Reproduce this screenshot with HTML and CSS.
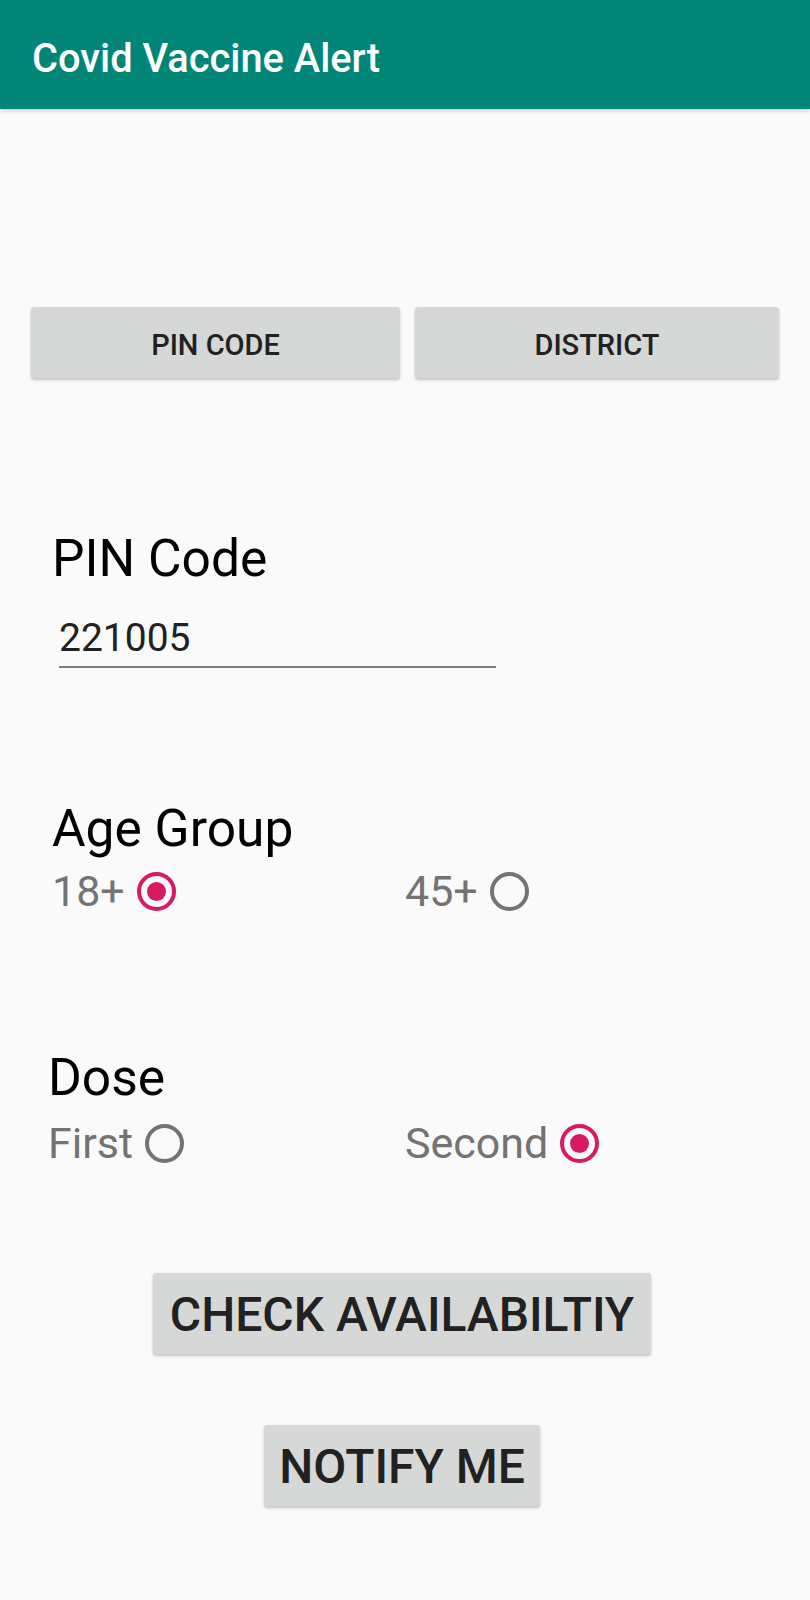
FILE: index.html
```html
<!DOCTYPE html>
<html lang="en">
<head>
<meta charset="utf-8">
<title>Covid Vaccine Alert</title>
<link rel="stylesheet" href="styles.css">
</head>
<body>
<header class="appbar">
  <h1 class="title">Covid Vaccine Alert</h1>
</header>
<main class="content">
  <div class="tabs">
    <button class="btn tab tab-pin">PIN CODE</button>
    <button class="btn tab tab-district">DISTRICT</button>
  </div>

  <section class="pin-field">
    <div class="label label-pin">PIN Code</div>
    <div class="input">221005</div>
  </section>

  <section class="group age-group">
    <div class="label label-age">Age Group</div>
    <div class="radio-row">
      <label class="radio-item"><span class="radio-text">18+</span><span class="radio checked"></span></label>
      <label class="radio-item"><span class="radio-text">45+</span><span class="radio"></span></label>
    </div>
  </section>

  <section class="group dose-group">
    <div class="label label-dose">Dose</div>
    <div class="radio-row dose-row">
      <label class="radio-item"><span class="radio-text">First</span><span class="radio"></span></label>
      <label class="radio-item"><span class="radio-text">Second</span><span class="radio checked"></span></label>
    </div>
  </section>

  <div class="actions">
    <button class="btn big check">CHECK AVAILABILTIY</button>
    <button class="btn big notify">NOTIFY ME</button>
  </div>
</main>
</body>
</html>
```

FILE: styles.css
```css
* { box-sizing: border-box; }

html, body {
  margin: 0;
  padding: 0;
  background: #fafafa;
  font-family: Roboto, "Noto Sans", "Liberation Sans", sans-serif;
  width: 810px;
  height: 1600px;
  overflow: hidden;
}

.appbar {
  height: 109px;
  background: #008577;
  display: flex;
  align-items: center;
  padding-left: 32px;
  box-shadow: 0 2px 4px rgba(0, 0, 0, 0.18);
  position: relative;
  z-index: 1;
}

.title {
  margin: 0;
  color: #ffffff;
  font-size: 39.8px;
  font-weight: 500;
  line-height: 1;
  padding-top: 8px;
}

.content {
  display: flex;
  flex-direction: column;
}

.btn {
  font-family: Roboto, "Noto Sans", "Liberation Sans", sans-serif;
  font-weight: 500;
  color: #212121;
  background: #d6d7d7;
  border: none;
  border-radius: 3px;
  box-shadow: 0 2px 3px rgba(0, 0, 0, 0.22);
  padding: 0;
}

.tabs {
  display: flex;
  gap: 15px;
  margin-top: 198px;
  padding-left: 31px;
}

.tab {
  height: 71px;
  font-size: 29px;
  padding-top: 4px;
}

.tab-pin { width: 369px; }
.tab-district { width: 364px; }

.label {
  font-size: 51.5px;
  line-height: 1;
  color: #000000;
}

.pin-field {
  margin-top: 155px;
  padding-left: 52px;
}

.input {
  margin-top: 34px;
  margin-left: 7px;
  width: 437px;
  font-size: 39px;
  line-height: 1;
  color: #212121;
  padding-left: 0;
  padding-bottom: 8px;
  border-bottom: 2px solid #7f7f7f;
}

.age-group {
  margin-top: 135px;
  padding-left: 52px;
}

.dose-group {
  margin-top: 139px;
  padding-left: 48px;
}

.radio-row {
  display: grid;
  grid-template-columns: 353px auto;
  margin-top: 16px;
}

.dose-row {
  grid-template-columns: 357px auto;
  margin-top: 18px;
}

.radio-item {
  display: flex;
  align-items: center;
  gap: 12px;
}

.radio-text {
  font-size: 43px;
  line-height: 1;
  color: #737373;
}

.radio {
  width: 39px;
  height: 39px;
  border-radius: 50%;
  border: 4px solid #737373;
  display: flex;
  align-items: center;
  justify-content: center;
}

.radio.checked {
  border-color: #d81b60;
}

.radio.checked::after {
  content: "";
  width: 19px;
  height: 19px;
  border-radius: 50%;
  background: #d81b60;
}

.actions {
  display: flex;
  flex-direction: column;
  align-items: center;
  gap: 71px;
  margin-top: 108px;
  padding-right: 6px;
}

.big {
  height: 81px;
  font-size: 48px;
  padding-top: 2px;
}

.check { width: 498px; }
.notify { width: 276px; }
```
